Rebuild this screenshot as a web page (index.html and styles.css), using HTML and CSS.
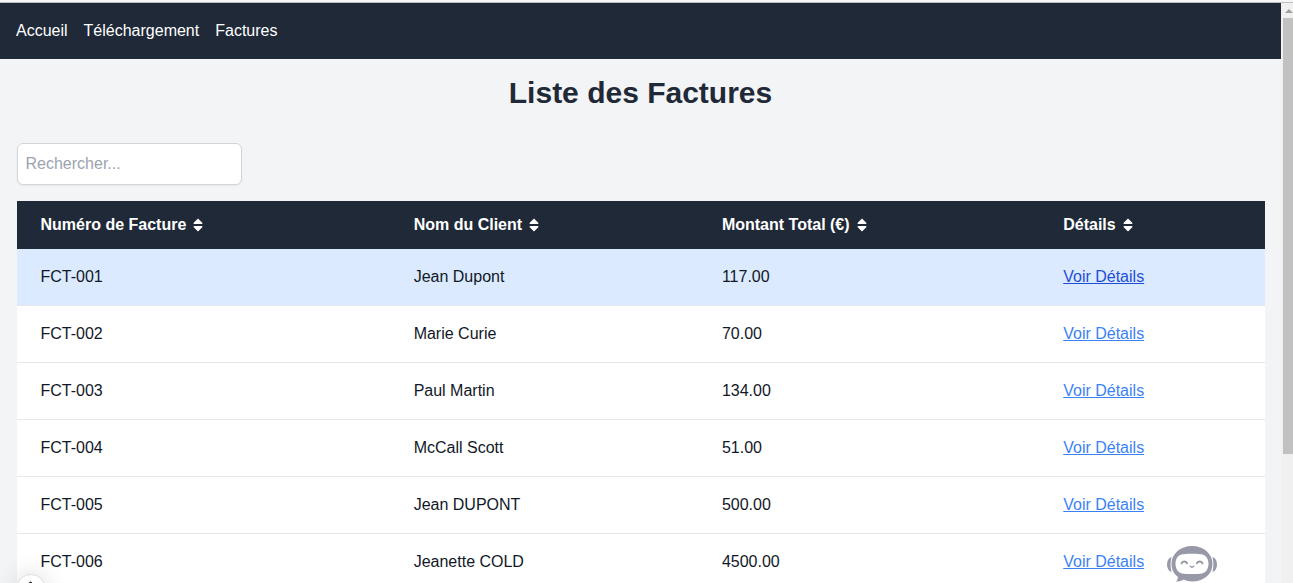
FILE: index.html
```html
<!DOCTYPE html>
<html lang="fr">
<head>
<meta charset="utf-8">
<meta name="viewport" content="width=device-width, initial-scale=1">
<title>Liste des Factures</title>
<link rel="stylesheet" href="styles.css">
</head>
<body>
<svg class="symbols" aria-hidden="true">
  <symbol id="sort" viewBox="0 0 320 512">
    <path d="M41 288h238c21.400 0 32.100 25.900 17 41L177 448c-9.400 9.400-24.600 9.400-33.900 0L24 329c-15.100-15.100-4.400-41 17-41zm255-105L177 64c-9.400-9.400-24.600-9.400-33.900 0L24 183c-15.100 15.100-4.400 41 17 41h238c21.400 0 32.100-25.900 17-41z"/>
  </symbol>
</svg>
<div class="window">
  <div class="page">
    <nav class="navbar">
      <a href="#accueil">Accueil</a>
      <a href="#telechargement">Téléchargement</a>
      <a href="#factures">Factures</a>
    </nav>
    <main class="container">
      <h1 class="title">Liste des Factures</h1>
      <input class="search" type="text" placeholder="Rechercher..." aria-label="Rechercher">
      <table class="invoices">
        <colgroup><col class="col-number"><col class="col-client"><col class="col-amount"><col class="col-details"></colgroup>
        <thead>
          <tr>
            <th scope="col">Numéro de Facture<svg class="sort-icon"><use href="#sort"/></svg></th>
            <th scope="col">Nom du Client<svg class="sort-icon"><use href="#sort"/></svg></th>
            <th scope="col">Montant Total (€)<svg class="sort-icon"><use href="#sort"/></svg></th>
            <th scope="col">Détails<svg class="sort-icon"><use href="#sort"/></svg></th>
          </tr>
        </thead>
        <tbody>
          <tr class="active"><td>FCT-001</td><td>Jean Dupont</td><td>117.00</td><td><a href="#fct-001">Voir Détails</a></td></tr>
          <tr><td>FCT-002</td><td>Marie Curie</td><td>70.00</td><td><a href="#fct-002">Voir Détails</a></td></tr>
          <tr><td>FCT-003</td><td>Paul Martin</td><td>134.00</td><td><a href="#fct-003">Voir Détails</a></td></tr>
          <tr><td>FCT-004</td><td>McCall Scott</td><td>51.00</td><td><a href="#fct-004">Voir Détails</a></td></tr>
          <tr><td>FCT-005</td><td>Jean DUPONT</td><td>500.00</td><td><a href="#fct-005">Voir Détails</a></td></tr>
          <tr><td>FCT-006</td><td>Jeanette COLD</td><td>4500.00</td><td><a href="#fct-006">Voir Détails</a></td></tr>
        </tbody>
      </table>
    </main>
  </div>
  <div class="scrollbar" aria-hidden="true">
    <svg class="scroll-arrow" viewBox="0 0 8 4"><path d="M0 4 4 0 8 4z"/></svg>
    <div class="scroll-thumb"></div>
  </div>
  <button class="bubble" type="button" aria-label="Ouvrir le menu">
    <svg viewBox="0 0 10 10"><path d="M5 1v8M3 3l2-2"/></svg>
  </button>
  <button class="assistant" type="button" aria-label="Assistant">
    <svg viewBox="0 0 50 37">
      <path fill="#9799a8" d="M4.500 11C1.500 12 0 15 0 18.500S1.500 25 4.500 26C3.300 21 3.300 16 4.500 11zM45.500 11c3 1 4.500 4 4.500 7.500S48.500 25 45.500 26c1.200-5 1.200-10 0-15z"/>
      <path fill="#9799a8" d="M25 0C13 0 4.500 8 4.500 18c0 5.500 2.500 10 6.500 13-.2 2-1 3.500-2 4.500 3 0 5.500-.6 7.500-2 2.500 1.300 5.500 2 8.500 2 12 0 20.500-7.500 20.500-17.500S37 0 25 0z"/>
      <path fill="#fff" d="M14.500 8.500C18 7.600 32 7.600 35.500 8.500c3.700 1 6 4.500 6 9.300 0 5-2.600 9-6.500 9.700-4.500.8-15.500.8-20 0-3.900-.7-6.500-4.700-6.500-9.700 0-4.800 2.300-8.300 6-9.300z"/>
      <path fill="none" stroke="#9799a8" stroke-width="2" stroke-linecap="round" d="M14.500 17.200c1.300-2.200 4.300-2.200 5.600 0M29.900 17.200c1.300-2.200 4.300-2.200 5.600 0"/>
      <path fill="none" stroke="#9799a8" stroke-width="1.400" stroke-linecap="round" d="M23.200 20.300c1 1 2.600 1 3.600 0"/>
    </svg>
  </button>
</div>
</body>
</html>
```
FILE: styles.css
```css
* {
  box-sizing: border-box;
}

body {
  margin: 0;
  background: #f3f4f6;
  color: #111827;
  font: 16px/24px "Liberation Sans", Arial, sans-serif;
}

.symbols {
  display: none;
}

.window {
  position: relative;
  display: flex;
  height: 100vh;
  overflow: hidden;
  border-top: 2px solid #f6f6f6;
  box-shadow: inset 0 1px #bfbfbf;
  padding-top: 1px;
}

.page {
  flex: 1;
  min-width: 0;
}

.navbar {
  display: flex;
  gap: 16px;
  padding: 16px;
  background: #1f2937;
}

.navbar a {
  color: #fff;
  text-decoration: none;
}

.container {
  max-width: 1280px;
  margin: 0 auto;
  padding: 16px;
}

.title {
  margin: 0 0 32px;
  color: #1f2937;
  font-size: 30px;
  line-height: 36px;
  text-align: center;
}

.search {
  display: block;
  width: 225px;
  margin-bottom: 16px;
  padding: 8px;
  border: 1px solid #d1d5db;
  border-radius: 6px;
  background: #fff;
  box-shadow: 0 1px 2px rgba(0, 0, 0, 0.05);
  color: inherit;
  font: inherit;
}

.search::placeholder {
  color: #9ca3af;
}

.invoices {
  width: 100%;
  border-collapse: separate;
  border-spacing: 0;
  table-layout: fixed;
  background: #fff;
}

.col-number {
  width: 29.9%;
}

.col-client {
  width: 24.7%;
}

.col-amount {
  width: 27.35%;
}

.col-details {
  width: 18.05%;
}

.invoices th {
  padding: 12px 24px;
  background: #1f2937;
  color: #fff;
  text-align: left;
}

.sort-icon {
  display: inline-block;
  width: 16px;
  height: 16px;
  margin-left: 4px;
  fill: currentColor;
  vertical-align: -3px;
}

.invoices td {
  padding: 16px 24px;
  border-bottom: 1px solid #e5e7eb;
}

.invoices td a {
  color: #3b82f6;
}

.invoices .active td {
  background: #dbeafe;
}

.invoices .active a {
  color: #1d4ed8;
}

.scrollbar {
  display: flex;
  flex-direction: column;
  width: 12px;
  padding: 6px 0 0 2px;
  background: #f0f0f0;
}

.scroll-arrow {
  width: 8px;
  height: 4px;
  margin: 0 2px 5px;
  fill: #a0a0a0;
  flex: none;
}

.scroll-thumb {
  height: 76%;
  background: #c1c1c1;
}

.bubble {
  position: absolute;
  left: 16px;
  bottom: -21px;
  display: flex;
  justify-content: center;
  width: 30px;
  height: 30px;
  padding: 6px;
  border: 1px solid #ddd;
  border-radius: 50%;
  background: #fff;
  box-shadow: 0 0 24px rgba(0, 0, 0, 0.15);
}

.bubble svg {
  width: 10px;
  height: 10px;
  fill: none;
  stroke: #333;
  stroke-width: 2;
}

.assistant {
  position: absolute;
  right: 76px;
  bottom: 0;
  padding: 0;
  border: 0;
  background: none;
}

.assistant svg {
  display: block;
  width: 50px;
  height: 37px;
}
```
